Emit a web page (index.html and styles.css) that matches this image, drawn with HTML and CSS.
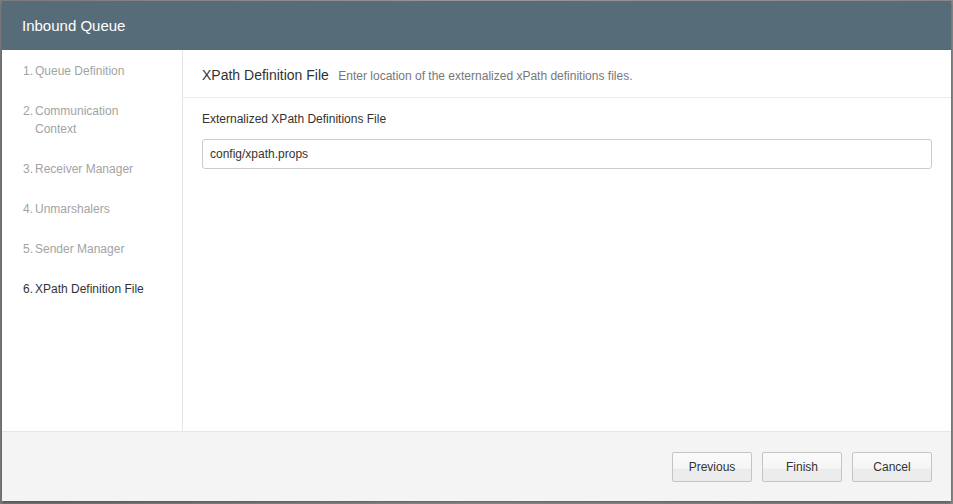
FILE: index.html
```html
<!DOCTYPE html>
<html lang="en">
<head>
    <meta charset="UTF-8">
    <title>Inbound Queue</title>
    <link rel="stylesheet" href="styles.css">
</head>
<body>
    <div class="dialog">
        <div class="dialog-header">Inbound Queue</div>

        <div class="dialog-body">
            <ul class="steps">
                <li class="step"><span class="step-num">1.</span><span>Queue Definition</span></li>
                <li class="step"><span class="step-num">2.</span><span>Communication Context</span></li>
                <li class="step"><span class="step-num">3.</span><span>Receiver Manager</span></li>
                <li class="step"><span class="step-num">4.</span><span>Unmarshalers</span></li>
                <li class="step"><span class="step-num">5.</span><span>Sender Manager</span></li>
                <li class="step active"><span class="step-num">6.</span><span>XPath Definition File</span></li>
            </ul>

            <div class="content">
                <div class="content-title">
                    <span class="title-main">XPath Definition File</span>
                    <span class="title-sub">Enter location of the externalized xPath definitions files.</span>
                </div>
                <div class="form">
                    <label class="field-label" for="xpath-file">Externalized XPath Definitions File</label>
                    <input class="field-input" id="xpath-file" type="text" value="config/xpath.props">
                </div>
            </div>
        </div>

        <div class="dialog-footer">
            <button class="btn">Previous</button>
            <button class="btn">Finish</button>
            <button class="btn">Cancel</button>
        </div>
    </div>
</body>
</html>
```

FILE: styles.css
```css
body {
    margin: 0;
    padding: 1px 2px 0 2px;
    height: 504px;
    box-sizing: border-box;
    background: linear-gradient(to right, #7d7d7d, #9a9a9a 50%, #8a8a8a);
    font-family: "Liberation Sans", Arial, sans-serif;
    overflow: hidden;
}

.dialog {
    width: 949px;
    height: 500px;
    background: #fff;
    display: flex;
    flex-direction: column;
    box-shadow: 0 2px 3px rgba(0, 0, 0, 0.35);
}

.dialog-header {
    height: 49px;
    flex-shrink: 0;
    background: #566d79;
    color: #fff;
    font-size: 15px;
    line-height: 50px;
    padding-left: 20px;
}

.dialog-body {
    flex: 1;
    display: flex;
}

.steps {
    list-style: none;
    margin: 0;
    padding: 12px 0 0 21px;
    width: 159px;
    border-right: 1px solid #e6e6e6;
}

.step {
    display: flex;
    font-size: 12px;
    line-height: 18px;
    color: #a3a3a3;
    margin-bottom: 22px;
    padding-right: 20px;
}

.step-num {
    width: 12px;
    flex-shrink: 0;
}

.step.active {
    color: #333;
}

.content {
    flex: 1;
}

.content-title {
    height: 48px;
    border-bottom: 1px solid #ebebeb;
    padding: 16px 0 0 19px;
    box-sizing: border-box;
}

.title-main {
    font-size: 14px;
    color: #333;
}

.title-sub {
    font-size: 12px;
    color: #777;
    margin-left: 5px;
}

.form {
    padding: 13px 19px 0 19px;
}

.field-label {
    display: block;
    font-size: 12px;
    color: #333;
    line-height: 16px;
    margin-bottom: 12px;
}

.field-input {
    display: block;
    width: 100%;
    height: 30px;
    box-sizing: border-box;
    border: 1px solid #ccc;
    border-radius: 3px;
    padding: 0 7px;
    font-family: "Liberation Sans", Arial, sans-serif;
    font-size: 12px;
    color: #333;
    outline: none;
}

.dialog-footer {
    height: 70px;
    flex-shrink: 0;
    box-sizing: border-box;
    background: #f4f4f4;
    border-top: 1px solid #e6e6e6;
    display: flex;
    justify-content: flex-end;
    gap: 10px;
    padding: 20px 19px 0 0;
}

.btn {
    width: 80px;
    height: 30px;
    border: 1px solid #c4c4c4;
    border-radius: 2px;
    background: linear-gradient(to bottom, #fafafa 0%, #f6f6f6 55%, #ececec 56%, #ececec 100%);
    font-family: "Liberation Sans", Arial, sans-serif;
    font-size: 12px;
    color: #333;
    cursor: pointer;
}
```
